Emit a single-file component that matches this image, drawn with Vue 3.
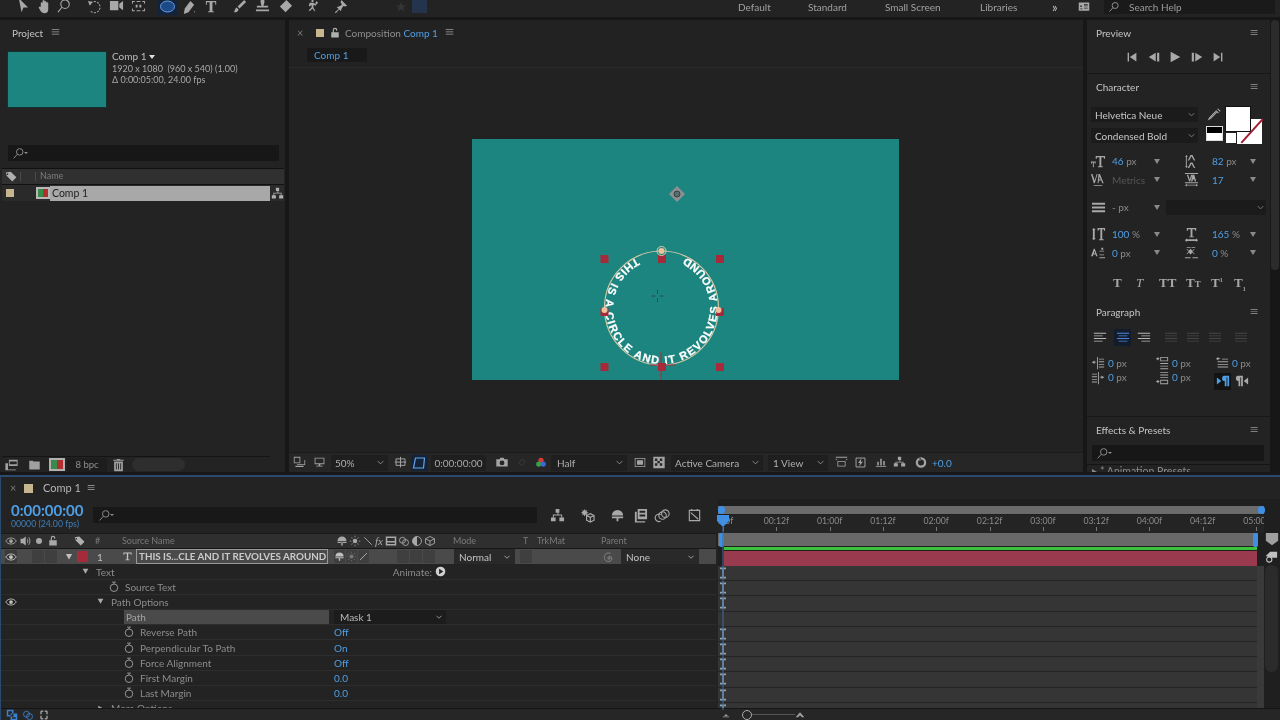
<script setup>
import { h } from 'vue'

const paths = {
  arrow: { f: 'M4 -2L14 8H9L7 13Z' },
  hand: { f: 'M4 7V3.5a1 1 0 012 0V1a1 1 0 012 0v1a1 1 0 012 0v1.5a1 1 0 012 0V10c0 3-2 4-4 4s-3-1-4-2L2 8.5c-.6-1 .6-2 1.5-1z' },
  zoom: { s: 'M7.5 0a4.5 4.5 0 100 9 4.5 4.5 0 000-9zM4 8l-4 5' },
  rotate: { s: 'M4 3A6 6 0 1 1 3 11', f: 'M1 1l5 1-3 4z', dash: true },
  camera: { f: 'M1 1h9v10H1zM11 4l4-3v10l-4-3z' },
  pan: { f: 'M1 1h3v1H2v2H1zM12 1h3v3h-1V2h-2zM1 9h1v2h2v1H1zM14 9h1v3h-3v-1h2zM6 1h4v1H6zM6 11h4v1H6zM5 5h2v3H5zM9 5h2v3H9z' },
  pen: { f: 'M10 1l4 4-6 8-5 2 1-6zM14 12h1v1h-1z' },
  textT: { f: 'M2 1h11v4h-1V2.5H9v9.5h1.5v1h-6v-1H6V2.5H3V5H2z' },
  brush: { f: 'M13 0l2 2-7 7-2-2zM5 8l2 2c-1 3-3 3-5 3 1-1 1-4 3-5z' },
  stamp: { f: 'M6 0h4v3L9 6h5v2H2V6h5L6 3zM1 10h14v2H1z' },
  eraser: { f: 'M9 0l6 6-7 7-6-6z' },
  roto: { f: 'M7 0h2v2H7zM5 3h4l3 2-1 1-2-1v3l2 4h-1L8 9l-3 3-1-1 3-3V5L5 7 4 6zM12 1l2 2-2 2-1-1z' },
  pin: { f: 'M9 0l6 6-2 1-2-.5-2 3-.5 2.5-2-2-3.5 4-1-1 4-3.5-2-2 2.5-.5 3-2L8 2z' },
  star: { f: 'M8 1l2 5h5l-4 3 2 5-5-3-5 3 2-5-4-3h5z' },
  menuBars: { f: 'M1 3h10v1H1zM1 6h10v1H1zM1 9h10v1H1z' },
  search: { s: 'M9.5 2a4 4 0 100 8 4 4 0 000-8zM6.5 9L2 14' },
  tag: { f: 'M1 3l6-1 7 7-5 5-7-7zM4 5a1 1 0 100 .1z' },
  flow: { f: 'M6 1h4v4H9v2h4v3h2v4h-5v-4h2V8H4v2h2v4H1v-4h2V7h5V5H6z' },
  prev: { f: 'M3 3h1.6v10H3zM13 3v10L5.5 8z' },
  back: { f: 'M10 3v10L2 8zM11.5 3H14v10h-2.5z' },
  play: { f: 'M3 2l11 6-11 6z' },
  fwd: { f: 'M2 3h2.5v10H2zM6 3l8 5-8 5z' },
  next: { f: 'M3 3l7.5 5L3 13zM11.4 3H13v10h-1.6z' },
  dropper: { s: 'M11 2l3 3M9 4l3 3M10 6l-7 7-2 1 1-2 7-7' },
  sizeT: { f: 'M5 2h10v3h-1l-.5-1.5H11V13h1.5v1h-5v-1H9V3.5H6.5L6 5H5zM0 8h5v2H4V9H3v5H2V9H1v1H0z' },
  lead: { f: 'M7 1h2l3 6h-1.500L8 2.500 5.500 7H4zM7 9h2l3 6h-1.500L8 10.500 5.500 15H4zM1 3l2-2 1 2H3v10h1l-1 2-2-2h1V3z' },
  kernV: { f: 'M0 2h1.500L4 9l2-7h1L4 12H3zM8 2h1.500l4 10H12l-1-3H8.500l-.5 3H7zM9 5l-.3 3H10.500zM3 14h9v1H3z' },
  track: { f: 'M1 1h14v1H1zM3 3h1.500L6 8l1.500-5H9L6.500 10H5.500zM9 3h2l2 7h-1.500l-.5-2H9.500L9 10H7.500zM1 11h14v1H1zM1 14l2-1.500V13.500h10V12.500l2 1.500-2 1.500V14.500H3V15.500z' },
  bars: { f: 'M1 3h14v2H1zM1 7h14v2H1zM1 11h14v2H1z' },
  vscale: { f: 'M3 1l2 2H4v9h1l-2 2-2-2h1V3H1zM7 1h8v3h-1l-.5-1.500H12V13h1.500v1h-5v-1H10V2.500H8.500L8 4H7z' },
  hscale: { f: 'M3 1h10v3h-1l-.5-1.500H9V10h1.500v1h-5v-1H7V2.500H4.500L4 4H3zM1 14l2-2v1h10v-1l2 2-2 2v-1H3v1z' },
  baseline: { f: 'M0 12L3 4h1l3 8H5.500L5 10H2.500L2 12zM3 9h1.500L3.700 6.500zM9 6h5v1H9zM9 10h5v1H9zM9 13h6v1H9zM11 3h2v2h-2z' },
  tsume: { f: 'M3 2h4v1H3zM8 2h4v1H8zM3 4l2 2 2-2 2 2 2-2v1l-2 2 2 2v1l-2-2-2 2-2-2-2 2V9l2-2-2-2zM1 13h6v1H1zM9 13h6v1H9z' },
  alignL: { f: 'M1 2h14v1H1zM1 5h10v1H1zM1 8h14v1H1zM1 11h10v1H1z' },
  alignC: { f: 'M1 2h14v1H1zM3 5h10v1H3zM1 8h14v1H1zM3 11h10v1H3z' },
  alignR: { f: 'M1 2h14v1H1zM5 5h10v1H5zM1 8h14v1H1zM5 11h10v1H5z' },
  justify: { f: 'M1 2h14v1H1zM1 5h14v1H1zM1 8h14v1H1zM1 11h14v1H1z' },
  indL: { f: 'M1 7l3-2v1.500h2v1H4V9zM7 1h1v14H7zM9 3h6v1H9zM9 6h6v1H9zM9 9h6v1H9zM9 12h6v1H9z' },
  indR: { f: 'M15 7l-3-2v1.500h-2v1h2V9zM8 1h1v14H8zM1 3h6v1H1zM1 6h6v1H1zM1 9h6v1H1zM1 12h6v1H1z' },
  spB: { f: 'M1 3l3-2v1.500h1v1H4V5zM6 1h9v5H6zM7 2v3h7V2zM6 8h9v1H6zM6 11h9v1H6zM6 14h9v1H6z' },
  spA: { f: 'M6 1h9v1H6zM6 4h9v1H6zM6 7h9v1H6zM1 12l3-2v1.500h1v1H4V14zM6 10h9v5H6zM7 11v3h7v-3z' },
  indF: { f: 'M1 3l3-2v1.500h2v1H4V5zM8 3h7v1H8zM3 6h12v1H3zM3 9h12v1H3zM3 12h12v1H3z' },
  ltr: { f: 'M1 4l5 4-5 4zM9 2h6v12h-2V4h-1v10h-2V8C8 8 7 7 7 5s1-3 2-3z' },
  rtl: { f: 'M15 4l-5 4 5 4zM3 2h6v12H7V4H6v10H4V8C3 8 1 7 1 5s1-3 2-3z' },
  interpret: { f: 'M5 2h10v7H5zM6 4v3h8V4zM1 6h3v7h9v1H1z' },
  folder: { f: 'M2 3h4l1 1h7v9H2z' },
  trash: { f: 'M6 1h4v1h4v1H2V2h4zM3 4h10v11H3zM5 6v7h1V6zM7.500 6v7h1V6zM10 6v7h1V6z' },
  lock: { f: 'M3 7h10v7H3zM5 7V4a3 3 0 016 0v1H9.500V4a1.500 1.500 0 00-3 0v3z' },
  screen: { f: 'M1 1h8v8H1zM2 2v6h6V2zM5 10h9V5h1v6H5zM3 12h10v1.500H3z' },
  monitor: { f: 'M2 2h12v8H2zM3 3v6h10V3zM7 10h2v2h3v1H4v-1h3z' },
  safe: { s: 'M2.500 3.500h11v8h-11zM8 1v13M1 7.500h14' },
  maskBox: { s: 'M4 3h9l-1 10H2z' },
  camera2: { f: 'M1 4h4l1-2h4l1 2h4v9H1zM8 5.500a3 3 0 100 6 3 3 0 000-6z' },
  chain: { s: 'M6 6a3 3 0 104 4M10 10a3 3 0 10-4-4' },
  region: { f: 'M1 2h14v12H1zM2 3v10h12V3zM4 5h8v6H4z' },
  checker: { f: 'M1 1h14v14H1zM3 3v3h3V3zM9 3v3h3V3zM6 6v3h3V6zM3 9v3h3V9zM9 9v3h3V9z' },
  fast: { f: 'M1 1h14v1H1zM3 6h10v7H3zM4 7v5h8V7zM1 3l2 2H1zM15 3l-2 2h2z' },
  fastP: { s: 'M2.500 2.500h11v11h-11z', f: 'M9 3L5 8.500h2.500L6 13l5-6H8.500z' },
  graph: { f: 'M1 13h14v1H1zM3 7h2v5H3zM7 3h2v9H7zM11 6h2v6h-2z' },
  flow2: { f: 'M6 1h4v4H9v2h4v2h2v4h-5V9h2V8H4v1h2v4H1V9h2V7h5V5H6z' },
  reset: { f: 'M8 1a7 7 0 100 14A7 7 0 008 1zm0 3a4 4 0 110 8 4 4 0 010-8zM6 1l3 3-3 2z' },
  mini: { f: 'M1 2h14v11H1zM3 6v2h2V6zM8 4v1h5V4zM8 6v1h5V6zM8 9v1h5V9zM3 10v1h3v-1z' },
  burst: { f: 'M5 1l1 2 2-1-1 2 2 1-2 1 1 2-2-1-1 2-1-2-2 1 1-2-2-1 2-1-1-2 2 1z', s: 'M11 6l4 2v5l-4 2-4-2V8zM7 8l4 2 4-2M11 10v5' },
  shy: { f: 'M8 2a6 6 0 016 6H2a6 6 0 016-6zM2 9h12v2H2zM7 11h2v3H7z' },
  frames: { f: 'M5 1h10v11H5zM7 3v2h6V3zM7 7v2h6V7zM2 4h2v10h9v1.500H2z' },
  circles: { s: 'M10 2a4 4 0 100 8 4 4 0 000-8zM7 4a4 4 0 100 8 4 4 0 000-8zM5 7a4 4 0 100 7' },
  graphEd: { s: 'M2.500 2.500h11v11h-11zM4 5l8 7M5 1v2M11 1v2' },
  eye: { s: 'M1 8c2-3 4-4 7-4s5 1 7 4c-2 3-4 4-7 4s-5-1-7-4z', f: 'M8 5.500a2.500 2.500 0 100 5 2.500 2.500 0 000-5z' },
  audio: { f: 'M2 5h3l4-3v12l-4-3H2z', s: 'M11 5c1 1 1 5 0 6M13 3c2 2 2 8 0 10' },
  dot: { f: 'M8 4a4 4 0 100 8 4 4 0 000-8z' },
  shyS: { f: 'M8 2a6 6 0 016 6H2a6 6 0 016-6zM2 9h12v1.500H2zM7 10h2v4H7z' },
  sun: { f: 'M8 5a3 3 0 100 6 3 3 0 000-6zM7.500 1h1v2h-1zM7.500 13h1v2h-1zM1 7.500h2v1H1zM13 7.500h2v1h-2zM3 3.700l.7-.7L5 4.300l-.7.7zM11 11.700l.7-.7L13 12.300l-.7.7zM3 12.300l1.300-1.300.7.7L3.700 13zM11 4.300L12.300 3l.7.7L11.700 5z' },
  slash: { s: 'M3 3l10 10' },
  slashR: { s: 'M3 13L13 3' },
  frameB: { f: 'M1 2h14v12H1zM3 4v4h10V4zM3 10v2h10v-2z' },
  half: { f: 'M8 2a6 6 0 100 12V2z', s: 'M8 2a6 6 0 110 12A6 6 0 018 2z' },
  cube: { s: 'M8 2l6 3v6l-6 3-6-3V5zM2 5l6 3 6-3M8 8v6' },
  spiral: { s: 'M8 8a1.500 1.500 0 11-1.500 1.500c0-2.500 4-3.500 5-.5s-1.500 5-4.500 5S1 11 2 7s5-5 8-4' },
  watch: { s: 'M8 4a5 5 0 100 10A5 5 0 008 4zM5.500 1.500h5M8 4V2' },
  tri: { f: 'M3 3h10l-5 9z' },
  triR: { f: 'M4 3l9 5-9 5z' },
  chev: { s: 'M4 6l4 4 4-4' },
  animate: { f: 'M8 1a7 7 0 100 14A7 7 0 008 1zM6 4l6 4-6 4z' },
  layerT: { f: 'M2 2h12v3.500h-1l-.5-2H9v9h2v1H5v-1h2v-9H3.500L3 5.500H2z' },
  stack: { f: 'M1 1h9v9H1zM3 3v5h5V3zM6 6h9v9H6zM8 11h5v2H8z' },
  circ2: { s: 'M6 3a4 4 0 100 8 4 4 0 000-8zM10 6a4 4 0 100 8 4 4 0 000-8z' },
  braces: { f: 'M4 2h3v2H5v3H3V5a3 3 0 011-3zM9 2h3a3 3 0 011 3v2h-2V4H9zM3 9h2v3h2v2H4a3 3 0 01-1-3zM11 9h2v2a3 3 0 01-1 3H9v-2h2z' },
  marker: { f: 'M1 1h14v9l-7 5-7-5z' },
  nav: { f: 'M2 8l5-5h8v7H8z', s: 'M6 9a3 3 0 100 6 3 3 0 000-6z' },
  mtn: { f: 'M1 13L8 5l7 8zM5 13l3-3 3 3z' },
  mtnS: { f: 'M5 11l3-3 3 3zM3 12h10v1H3z' }
}

const Ic = (props) => {
  const p = paths[props.n] || {}
  const kids = []
  if (p.f) kids.push(h('path', { d: p.f, fill: 'currentColor', 'fill-rule': 'evenodd' }))
  if (p.s) kids.push(h('path', { d: p.s, fill: 'none', stroke: 'currentColor', 'stroke-width': 1.2, 'stroke-dasharray': p.dash ? '2 1.5' : undefined }))
  return h('svg', { class: 'ic', viewBox: '0 0 16 16' }, kids)
}
Ic.props = ['n']

const rows = [
  { name: 'Text', indent: 95, tri: 'tri', animate: true, key: true },
  { name: 'Source Text', indent: 124, watch: true, key: true },
  { name: 'Path Options', indent: 110, tri: 'tri', eye: true, key: true },
  { name: 'Path', indent: 126, path: true, key: false },
  { name: 'Reverse Path', indent: 139, watch: true, value: 'Off', key: true },
  { name: 'Perpendicular To Path', indent: 139, watch: true, value: 'On', key: true },
  { name: 'Force Alignment', indent: 139, watch: true, value: 'Off', key: true },
  { name: 'First Margin', indent: 139, watch: true, value: '0.0', key: true },
  { name: 'Last Margin', indent: 139, watch: true, value: '0.0', key: true },
  { name: 'More Options', indent: 110, tri: 'triR', key: true }
]
const ticks = ['0:00f', '00:12f', '01:00f', '01:12f', '02:00f', '02:12f', '03:00f', '03:12f', '04:00f', '04:12f', '05:00f']
const toolsA = ['arrow', 'hand', 'zoom']
const toolsB = ['rotate', 'camera', 'pan']
</script>

<template>
  <div class="app">
    <header class="toolbar">
      <span class="grip"></span>
      <div class="tgroup g1"><Ic v-for="t in toolsA" :key="t" :n="t" /></div>
      <div class="tgroup g2"><Ic v-for="t in toolsB" :key="t" :n="t" /></div>
      <span class="ellipse-btn">
        <svg viewBox="0 0 16 14" class="ellipse"><ellipse cx="8" cy="6.500" rx="7" ry="5.500" /></svg>
      </span>
      <div class="tgroup g3"><Ic n="pen" /><Ic n="textT" /></div>
      <div class="tgroup g4"><Ic n="brush" /><Ic n="stamp" /><Ic n="eraser" /></div>
      <div class="tgroup g5"><Ic n="roto" /><Ic n="pin" /></div>
      <Ic n="star" class="dimstar" />
      <span class="dimbox"></span>
      <nav class="workspaces">
        <span class="ws ws1">Default</span>
        <span class="ws ws2">Standard</span>
        <span class="ws ws3">Small Screen</span>
        <span class="ws ws4">Libraries</span>
        <span class="ws5">»</span>
        <Ic n="mini" class="wsicon" />
      </nav>
      <div class="help"><Ic n="search" /><span>Search Help</span></div>
    </header>

    <div class="main">
      <section class="project">
        <div class="phead"><span class="ptitle">Project</span><Ic n="menuBars" /></div>
        <div class="pinfo">
          <div class="thumb"></div>
          <div class="meta">
            <div class="meta-t">Comp 1 <i class="down"></i></div>
            <div>1920 x 1080&nbsp; (960 x 540) (1.00)</div>
            <div>Δ 0:00:05:00, 24.00 fps</div>
          </div>
        </div>
        <div class="search psearch"><Ic n="search" /><i class="mini-down"></i></div>
        <div class="pcols">
          <Ic n="tag" class="ptag" /><span class="sep"></span><span class="sep s2"></span><span class="pname">Name</span>
        </div>
        <div class="pitem">
          <span class="swatch"></span>
          <span class="compicon"><i></i></span>
          <span class="pitem-name">Comp 1</span>
          <Ic n="flow" class="pflow" />
        </div>
        <div class="grow"></div>
        <div class="pfoot">
          <Ic n="interpret" /><Ic n="folder" /><span class="colorcomp"><i></i></span>
          <span class="bpc">8 bpc</span><Ic n="trash" class="ptrash" /><span class="pill"></span>
        </div>
      </section>

      <section class="viewer">
        <div class="vhead">
          <span class="x">×</span><span class="swatch sw2"></span><Ic n="lock" class="vlock" />
          <span class="vtitle">Composition <b>Comp 1</b></span><Ic n="menuBars" />
        </div>
        <div class="vtabs"><span class="vtab">Comp 1</span></div>
        <div class="stage">
          <div class="canvas">
            <svg class="overlay" viewBox="472 139 427 241">
              <defs>
                <path id="ring" d="M661.500 252A56 56 0 1 0 661.600 252" />
              </defs>
              <circle cx="661.500" cy="308" r="57" fill="none" stroke="#cfc7a4" stroke-width="1.200" />
              <text class="ringtext">
                <textPath href="#ring" startOffset="26" textLength="300" lengthAdjust="spacing">THIS IS A CIRCLE AND IT REVOLVES AROUND</textPath>
              </text>
              <g fill="#a52b3b">
                <rect x="600.500" y="255" width="8" height="8" /><rect x="658" y="255" width="8" height="8" />
                <rect x="716" y="255" width="8" height="8" /><rect x="600.500" y="308" width="8" height="8" />
                <rect x="716" y="308" width="8" height="8" /><rect x="600.500" y="363" width="8" height="8" />
                <rect x="658" y="363" width="8" height="8" /><rect x="716" y="363" width="8" height="8" />
              </g>
              <path d="M661 352V380M650 365H675" stroke="#a52b3b" stroke-width="1" />
              <g fill="#efc29c">
                <circle cx="661.500" cy="251" r="3" /><circle cx="604.500" cy="310" r="3" /><circle cx="718.500" cy="310" r="3" />
              </g>
              <circle cx="661.500" cy="251" r="4.500" fill="none" stroke="#d8cfa8" />
              <path d="M657.500 290V294M657.500 298V302M651.500 296H655.500M659.500 296H663.500" stroke="#2b4d4c" stroke-width="1" />
              <path d="M677 186L685 194L677 202L669 194Z" fill="#8e8f95" />
              <circle cx="677" cy="194" r="3" fill="#54706f" stroke="#33403f" />
            </svg>
          </div>
        </div>
        <div class="vfoot">
          <Ic n="screen" /><Ic n="monitor" />
          <span class="drop">50%<Ic n="chev" /></span>
          <Ic n="safe" /><span class="maskbtn"><Ic n="maskBox" /></span>
          <span class="vtime">0:00:00:00</span>
          <Ic n="camera2" /><Ic n="chain" class="dim" />
          <svg class="rgb" viewBox="0 0 16 16"><circle cx="8" cy="5" r="3.500" fill="#d93a3a" /><circle cx="5" cy="10" r="3.500" fill="#3aa04a" /><circle cx="11" cy="10" r="3.500" fill="#3a6ad9" /></svg>
          <span class="drop">Half<Ic n="chev" /></span>
          <Ic n="region" /><Ic n="checker" />
          <span class="drop">Active Camera<Ic n="chev" /></span>
          <span class="drop">1 View<Ic n="chev" /></span>
          <Ic n="fast" /><Ic n="fastP" /><Ic n="graph" /><Ic n="flow2" /><Ic n="reset" />
          <span class="exposure">+0.0</span>
        </div>
      </section>

      <aside class="side">
        <section class="preview">
          <div class="shead"><span>Preview</span><Ic n="menuBars" /></div>
          <div class="controls">
            <Ic n="prev" /><Ic n="back" /><Ic n="play" /><Ic n="fwd" /><Ic n="next" />
          </div>
        </section>
        <section class="character">
          <div class="shead"><span>Character</span><Ic n="menuBars" /></div>
          <div class="fontarea">
            <div class="fontcol">
              <div class="fontsel"><span>Helvetica Neue</span><Ic n="chev" /></div>
              <div class="fontsel"><span>Condensed Bold</span><Ic n="chev" /></div>
            </div>
            <div class="pickcol">
              <Ic n="dropper" class="dropper" />
              <div class="bw"><i></i><b></b></div>
            </div>
            <div class="swatches">
              <span class="strokebox"></span><span class="nonebox"></span><span class="fillbox"></span>
              <span class="redslash"></span>
            </div>
          </div>
          <div class="cgrid">
            <div class="cell"><Ic n="sizeT" /><span class="v"><b>46</b> px</span><i class="arr"></i></div>
            <div class="cell c2"><Ic n="lead" /><span class="v"><b>82</b> px</span><i class="arr"></i></div>
            <div class="cell"><Ic n="kernV" /><span class="v off">Metrics</span><i class="arr"></i></div>
            <div class="cell c2"><Ic n="track" /><span class="v"><b>17</b></span><i class="arr"></i></div>
          </div>
          <div class="cell stroke-row">
            <Ic n="bars" /><span class="v">- px</span><i class="arr"></i>
            <div class="strokesel"><Ic n="chev" /></div>
          </div>
          <div class="cgrid cg3">
            <div class="cell"><Ic n="vscale" /><span class="v"><b>100</b> %</span><i class="arr"></i></div>
            <div class="cell c2"><Ic n="hscale" /><span class="v"><b>165</b> %</span><i class="arr"></i></div>
            <div class="cell"><Ic n="baseline" /><span class="v"><b>0</b> px</span><i class="arr"></i></div>
            <div class="cell c2"><Ic n="tsume" /><span class="v"><b>0</b> %</span><i class="arr"></i></div>
          </div>
          <div class="tstyles">
            <span class="b">T</span><span class="it">T</span><span>TT</span><span>T<small>T</small></span><span>T<sup>1</sup></span><span>T<sub>1</sub></span>
          </div>
        </section>
        <section class="paragraph">
          <div class="shead"><span>Paragraph</span><Ic n="menuBars" /></div>
          <div class="aligns">
            <Ic n="alignL" /><span class="alignon"><Ic n="alignC" /></span><Ic n="alignR" />
            <span class="adim"><Ic n="justify" /><Ic n="justify" /><Ic n="justify" /><Ic n="justify" /></span>
          </div>
          <div class="pgrid">
            <span class="pv"><Ic n="indL" /><span class="v"><b>0</b> px</span></span>
            <span class="pv"><Ic n="spB" /><span class="v"><b>0</b> px</span></span>
            <span class="pv"><Ic n="indF" /><span class="v"><b>0</b> px</span></span>
            <span class="pv up"><Ic n="indR" /><span class="v"><b>0</b> px</span></span>
            <span class="pv up"><Ic n="spA" /><span class="v"><b>0</b> px</span></span>
            <span class="dirs"><span class="diron"><Ic n="ltr" /></span><Ic n="rtl" /></span>
          </div>
        </section>
        <section class="effects">
          <div class="shead"><span>Effects &amp; Presets</span><Ic n="menuBars" /></div>
          <div class="search esearch"><Ic n="search" /><i class="mini-down"></i></div>
          <div class="tree"><i class="rt"></i>* Animation Presets</div>
        </section>
      </aside>

      <div class="sidebar"><span></span></div>
    </div>

    <section class="timeline">
      <div class="ttabs">
        <span class="x">×</span><span class="swatch sw3"></span><span class="ttitle">Comp 1</span><Ic n="menuBars" />
      </div>
      <div class="tbody">
        <div class="tleft">
          <div class="ttools">
            <div class="timecode"><div class="tc">0:00:00:00</div><div class="tf">00000 (24.00 fps)</div></div>
            <div class="search tsearch"><Ic n="search" /><i class="mini-down"></i></div>
            <div class="tbtns">
              <Ic n="flow" class="fb1" /><Ic n="burst" class="fb2" /><Ic n="shy" class="fb3" /><Ic n="frames" class="fb4" /><Ic n="circles" class="fb5" /><Ic n="graphEd" class="fb6" />
            </div>
          </div>
          <div class="cols">
            <span class="swset"><Ic n="eye" /><Ic n="audio" /><Ic n="dot" /><Ic n="lock" /></span>
            <Ic n="tag" class="ctag" />
            <span class="chash">#</span>
            <span class="csrc">Source Name</span>
            <span class="cswitch"><Ic n="shyS" /><Ic n="sun" /><Ic n="slash" /><em>fx</em><Ic n="frameB" /><Ic n="circ2" /><Ic n="half" /><Ic n="cube" /></span>
            <span class="cmode">Mode</span>
            <span class="ct">T</span>
            <span class="ctrk">TrkMat</span>
            <span class="cpar">Parent</span>
          </div>
          <div class="layer">
            <span class="leye"><Ic n="eye" /></span>
            <span class="blank b1"></span><span class="blank"></span>
            <Ic n="tri" class="ltri" />
            <span class="lred"></span>
            <span class="lnum">1</span>
            <Ic n="layerT" class="lt" />
            <span class="lname">THIS IS...CLE AND IT REVOLVES AROUND</span>
            <span class="lsw">
              <span class="on"><Ic n="shyS" /></span><span class="on dimmed"><Ic n="sun" /></span><span class="on"><Ic n="slashR" /></span>
              <span class="gap"></span><span class="blank"></span><span class="blank"></span><span class="blank"></span>
            </span>
            <span class="lmode">Normal<Ic n="chev" /></span>
            <span class="blank lb"></span>
            <Ic n="spiral" class="lspiral" />
            <span class="lpar">None<Ic n="chev" /></span>
          </div>
          <div class="props">
            <div v-for="r in rows" :key="r.name" class="prow">
              <span v-if="r.eye" class="peye"><Ic n="eye" /></span>
              <div class="pn" :class="{ pathcell: r.path }" :style="{ paddingLeft: r.path ? '2px' : r.indent + 'px' }">
                <Ic v-if="r.tri" :n="r.tri" class="ptri" />
                <Ic v-if="r.watch" n="watch" class="pwatch" />
                <span>{{ r.name }}</span>
                <span v-if="r.animate" class="anim">Animate:<Ic n="animate" /></span>
              </div>
              <div v-if="r.path" class="masksel"><span>Mask 1</span><Ic n="chev" /></div>
              <div v-else-if="r.value" class="pvalue">{{ r.value }}</div>
            </div>
          </div>
        </div>

        <div class="tright">
          <div class="nav"><i class="nav-l"></i><i class="nav-r"></i></div>
          <div class="ruler">
            <span v-for="t in ticks" :key="t" class="tick">{{ t }}</span>
          </div>
          <div class="work"><i class="w-l"></i><i class="w-r"></i></div>
          <div class="green"></div>
          <div class="redbar"></div>
          <div class="tracks">
            <div v-for="r in rows" :key="r.name" class="track">
              <svg v-if="r.key" class="beam" viewBox="0 0 7 13"><path d="M0 0h7v2H4.500v9H7v2H0v-2h2.500V2H0z" /></svg>
            </div>
          </div>
          <svg class="playhead" viewBox="0 0 14 196">
            <path d="M1 1h12v6l-6 6-6-6z" fill="#3f8fe2" />
            <path d="M7 12V196" stroke="#3d6c9e" stroke-width="1" />
          </svg>
          <div class="tside">
            <Ic n="marker" class="smark" />
            <Ic n="nav" class="snav" />
            <span class="sscroll"></span>
          </div>
        </div>
      </div>
      <footer class="tfoot">
        <span class="fl"><Ic n="stack" /><Ic n="circ2" /><Ic n="braces" /></span>
        <span class="fr"><Ic n="mtnS" /><span class="fring"></span><span class="fline"></span><Ic n="mtn" /></span>
      </footer>
    </section>
  </div>
</template>

<style scoped>
.app { width: 1280px; height: 720px; overflow: hidden; display: flex; flex-direction: column; background: #171717; color: #a3a3a3; font: 10px/1.2 Lato, sans-serif; filter: blur(0.3px); }
.toolbar { height: 17px; margin-bottom: 3px; flex: none; background: #232323; display: flex; align-items: flex-start; overflow: hidden; color: #a8a8a8; position: relative; }
.grip { width: 15px; flex: none; }
.tgroup { display: flex; flex: none; }
.tgroup .ic { width: 15px; height: 15px; }
.g1 { gap: 6.500px; }
.g2 { gap: 7px; margin-left: 14px; }
.ellipse-btn { width: 20px; height: 15px; background: #12233d; margin-left: 11px; display: block; flex: none; }
.ellipse { width: 17px; height: 14px; margin-left: 1.500px; display: block; }
.ellipse ellipse { fill: #1c4a88; stroke: #6b9bdc; stroke-width: 1; }
.g3 { gap: 8px; margin-left: 4px; }
.g4 { gap: 8px; margin-left: 13px; }
.g5 { gap: 13px; margin-left: 12px; }
.dimstar { width: 12px; height: 12px; margin-left: 47px; margin-top: 1px; color: #343434; flex: none; }
.dimbox { width: 15px; height: 13px; margin-left: 5px; background: #24344c; flex: none; }
.workspaces { margin-left: 311px; display: flex; align-items: center; height: 14px; color: #a0a0a0; flex: none; }
.ws { display: block; flex: none; }
.ws1 { width: 70px; }
.ws2 { width: 77px; }
.ws3 { width: 95px; }
.ws4 { width: 72px; }
.ws5 { width: 24px; font-size: 13px; line-height: 12px; color: #c0c0c0; flex: none; }
.wsicon { width: 16px; height: 12px; color: #a8a8a8; flex: none; }
.help { margin-left: 12px; width: 171px; height: 14px; background: #1a1a1a; display: flex; align-items: center; gap: 9px; padding-left: 4px; color: #9a9a9a; box-sizing: border-box; flex: none; }
.help .ic { width: 12px; height: 12px; }

.main { height: 452px; flex: none; display: flex; }
.project { width: 285px; background: #232323; display: flex; flex-direction: column; flex: none; }
.phead { height: 24px; display: flex; align-items: center; padding: 2px 0 0 12px; gap: 8px; box-sizing: border-box; color: #c4c4c4; flex: none; }
.phead .ic { width: 12px; height: 12px; color: #a0a0a0; }
.pinfo { display: flex; padding: 7px 0 0 7px; height: 101px; box-sizing: border-box; flex: none; }
.thumb { width: 100px; height: 57px; box-sizing: border-box; background: #1d8580; border: 1px solid #14302f; }
.meta { margin-left: 5px; font-size: 9px; line-height: 11.500px; color: #a8a8a8; }
.meta-t { color: #bcbcbc; font-size: 10px; }
.down { display: inline-block; border: 3px solid transparent; border-top: 4px solid #e0e0e0; border-bottom: 0; vertical-align: 1px; }
.search { background: #171717; display: flex; align-items: center; color: #8c8c8c; box-sizing: border-box; }
.search .ic { width: 13px; height: 13px; }
.mini-down { border: 2px solid transparent; border-top: 2px solid #8c8c8c; border-bottom: 0; margin-left: -1px; }
.psearch { width: 271px; height: 16px; margin-left: 8px; padding-left: 4px; border-radius: 1px; flex: none; }
.pcols { margin: 7px 0 0 2px; height: 17px; width: 282px; background: #303030; border-top: 1px solid #111; border-bottom: 1px solid #111; box-sizing: border-box; display: flex; align-items: center; color: #7d7d7d; font-size: 9px; flex: none; }
.ptag { width: 13px; height: 13px; margin-left: 3px; color: #b0b0b0; }
.sep { width: 1px; height: 9px; background: #4a4a4a; margin-left: 2px; }
.s2 { margin-left: 14px; }
.pname { margin-left: 4px; }
.pitem { margin-left: 2px; width: 282px; height: 16px; background: #2a2a2a; display: flex; align-items: center; flex: none; }
.swatch { width: 8px; height: 8px; background: #c6b58e; display: block; flex: none; }
.pitem .swatch { margin-left: 4px; }
.compicon { width: 14px; height: 12px; background: #b8b8b8; margin-left: 22px; display: block; padding: 2px; box-sizing: border-box; }
.compicon i, .colorcomp i { display: block; width: 100%; height: 100%; background: linear-gradient(90deg, #3a8a4c 50%, #b03030 50%); }
.pitem-name { width: 220px; height: 15px; background: #a8a8a8; color: #1e1e1e; line-height: 15px; padding-left: 2px; box-sizing: border-box; font-size: 10.500px; }
.pflow { width: 13px; height: 13px; margin-left: 1px; color: #b0b0b0; }
.grow { flex: 1; }
.pfoot { height: 16px; border-top: 1px solid #141414; box-sizing: border-box; display: flex; align-items: center; margin-left: 2px; width: 268px; color: #a0a0a0; flex: none; }
.pfoot .ic { width: 15px; height: 14px; margin-left: 2px; }
.pfoot .ic:nth-child(2) { margin-left: 8px; }
.colorcomp { width: 16px; height: 13px; background: #b0b0b0; padding: 2px; box-sizing: border-box; margin-left: 7px; display: block; }
.bpc { margin-left: 2px; width: 40px; height: 14px; background: #1d1d1d; text-align: center; line-height: 14px; font-size: 9.500px; color: #8f8f8f; }
.pfoot .ptrash { margin-left: 4px; }
.pill { width: 53px; height: 13px; border-radius: 7px; background: #2e2e2e; margin-left: 6px; }

.viewer { width: 794px; margin-left: 4px; flex: none; background: #222; display: flex; flex-direction: column; }
.vhead { height: 24px; flex: none; display: flex; align-items: center; padding: 2px 0 0 8px; box-sizing: border-box; color: #a0a0a0; }
.vhead .ic { width: 12px; height: 12px; }
.x { width: 8px; color: #7a7a7a; font-size: 11px; flex: none; }
.sw2 { margin-left: 11px; }
.vhead .vlock { margin-left: 5px; color: #b0b0b0; }
.vtitle { margin-left: 4px; margin-right: 7px; color: #8f8f8f; }
.vtitle b { font-weight: 400; color: #4f9fe6; }
.vtabs { height: 24px; flex: none; border-bottom: 1px solid #2a2a2a; padding: 4px 0 0 18px; box-sizing: border-box; }
.vtab { display: block; width: 60px; height: 14px; background: #191919; color: #4f9fe6; line-height: 14px; padding-left: 7px; box-sizing: border-box; }
.stage { flex: 1; display: flex; align-items: center; padding-left: 183px; padding-bottom: 2px; box-sizing: border-box; min-height: 0; }
.canvas { width: 427px; height: 241px; background: #1d8580; position: relative; }
.overlay { position: absolute; inset: 0; width: 100%; height: 100%; }
.ringtext { font: 700 11px "Liberation Sans", sans-serif; fill: #fff; stroke: #fff; stroke-width: 0.25px; }
.vfoot { height: 20px; flex: none; background: #262626; border-top: 1px solid #1b1b1b; box-sizing: border-box; display: flex; align-items: center; color: #a4a4a4; font-size: 10px; }
.vfoot > .ic { width: 13px; height: 13px; flex: none; }
.vfoot > :nth-child(1) { margin-left: 4px; }
.vfoot > :nth-child(2) { margin-left: 7px; }
.vfoot > :nth-child(3) { margin-left: 5px; width: 57px; padding-left: 4px; }
.vfoot > :nth-child(4) { margin-left: 6px; }
.vfoot > :nth-child(5) { margin-left: 4px; }
.vfoot > :nth-child(6) { margin-left: 3px; }
.vfoot > :nth-child(7) { margin-left: 9px; width: 14px; }
.vfoot > :nth-child(8) { margin-left: 7px; width: 12px; }
.vfoot > :nth-child(9) { margin-left: 7px; }
.vfoot > :nth-child(10) { margin-left: 4px; width: 76px; padding-left: 6px; }
.vfoot > :nth-child(11) { margin-left: 7px; width: 12px; }
.vfoot > :nth-child(12) { margin-left: 6px; width: 14px; }
.vfoot > :nth-child(13) { margin-left: 5px; width: 92px; padding-left: 4px; }
.vfoot > :nth-child(14) { margin-left: 5px; width: 60px; padding-left: 5px; }
.vfoot > :nth-child(15) { margin-left: 7px; }
.vfoot > :nth-child(16) { margin-left: 5px; width: 15px; }
.vfoot > :nth-child(17) { margin-left: 7px; width: 12px; }
.vfoot > :nth-child(18) { margin-left: 6px; }
.vfoot > :nth-child(19) { margin-left: 9px; width: 12px; }
.vfoot > :nth-child(20) { margin-left: 5px; }
.drop { display: flex; align-items: center; justify-content: space-between; height: 16px; background: #1f1f1f; padding-right: 2px; box-sizing: border-box; color: #b0b0b0; flex: none; }
.drop .ic { width: 11px; height: 11px; color: #999; }
.maskbtn { width: 17px; height: 16px; background: #13233a; display: block; color: #6aa5ea; flex: none; }
.maskbtn .ic { width: 17px; height: 16px; display: block; }
.vtime { width: 55px; height: 16px; background: #1f1f1f; line-height: 17px; text-align: center; color: #a8a8a8; font-size: 10px; flex: none; }
.dim { color: #3d3d3d; }
.rgb { width: 12px; height: 13px; flex: none; }
.exposure { color: #4f9fe6; }

.side { width: 183px; margin-left: 4px; flex: none; background: #232323; overflow: hidden; display: flex; flex-direction: column; }
.shead { height: 26px; display: flex; justify-content: space-between; align-items: center; padding: 0 9px; box-sizing: border-box; color: #c4c4c4; font-size: 10px; }
.shead .ic { width: 11px; height: 11px; color: #a0a0a0; }
.preview { height: 54px; flex: none; border-bottom: 1px solid #181818; box-sizing: border-box; }
.controls { display: flex; gap: 7.500px; padding: 0 0 0 38px; margin-top: 4px; color: #a8a8a8; }
.controls .ic { width: 14px; height: 14px; }
.character { height: 223px; flex: none; }
.fontarea { position: relative; display: flex; padding-left: 4px; margin-top: 6px; height: 44px; }
.fontcol { width: 107px; display: flex; flex-direction: column; gap: 6px; margin-top: 1px; }
.fontsel { height: 15px; background: #1b1b1b; display: flex; justify-content: space-between; align-items: center; padding-left: 4px; color: #c8c8c8; font-size: 10px; }
.fontsel .ic { width: 11px; height: 11px; margin-right: 1px; color: #8a8a8a; }
.pickcol { width: 20px; margin-left: 8px; }
.dropper { width: 14px; height: 14px; display: block; margin: 1px 0 0 2px; color: #b0b0b0; }
.bw { width: 17px; height: 15px; margin-top: 5px; border: 1px solid #ddd; box-sizing: border-box; }
.bw i { display: block; height: 45%; background: #000; }
.bw b { display: block; height: 55%; background: #fff; }
.swatches { position: absolute; left: 138px; top: 0; width: 38px; height: 38px; overflow: hidden; }
.strokebox { position: absolute; left: 12px; top: 13px; width: 25px; height: 25px; background: #fff; }
.nonebox { position: absolute; left: 1px; top: 27px; width: 10px; height: 10px; background: #fff; }
.fillbox { position: absolute; left: 0; top: 0; width: 26px; height: 26px; background: #fff; border: 1px solid #111; box-sizing: border-box; }
.redslash { position: absolute; left: 11px; top: 24px; width: 32px; height: 2px; background: #a01c2e; transform: rotate(-48deg); }
.cgrid { display: grid; grid-template-columns: 93px 90px; margin-top: 2px; grid-auto-rows: 18.500px; padding-left: 4px; }
.cell { display: flex; align-items: center; color: #9a9a9a; }
.cell .ic { width: 15px; height: 15px; flex: none; color: #a8a8a8; }
.v { color: #8a8a8a; font-size: 10px; }
.v b { font-weight: 400; color: #4f9fe6; }
.cell .v { margin-left: 6px; width: 42px; }
.off { color: #565656; }
.arr { border: 3px solid transparent; border-top: 5px solid #8a8a8a; border-bottom: 0; }
.c2 .ic { margin-right: 7px; }
.c2 .v { width: 38px; margin-left: 6px; }
.stroke-row { margin: 10px 0 0 4px; height: 16px; }
.strokesel { margin-left: 6px; width: 100px; height: 15px; background: #1b1b1b; display: flex; justify-content: flex-end; align-items: center; }
.strokesel .ic { width: 11px; height: 11px; color: #888; }
.cg3 { margin-top: 10px; }
.tstyles { display: flex; margin-top: 13px; padding-left: 26px; font: 700 13px "Liberation Serif", serif; color: #a8a8a8; }
.tstyles span { width: 23px; }
.tstyles span:nth-child(3) { width: 27px; }
.tstyles span:nth-child(4) { width: 25px; }
.tstyles .it { font-style: italic; font-weight: 400; }
.tstyles small { font-size: 9px; }
.tstyles sup, .tstyles sub { font-size: 6px; }
.paragraph { height: 120px; flex: none; border-bottom: 1px solid #181818; box-sizing: border-box; padding-top: 2px; }
.aligns { display: flex; align-items: center; padding-left: 5px; margin-top: 4px; color: #b8b8b8; height: 17px; }
.aligns .ic { width: 16px; height: 14px; flex: none; }
.aligns > .ic:nth-child(3) { margin-left: 5px; }
.alignon { width: 17px; height: 17px; background: #131c2c; margin-left: 6px; color: #4a86d8; display: flex; align-items: center; justify-content: center; }
.adim { display: flex; gap: 6px; margin-left: 11px; color: #474747; }
.adim .ic:nth-child(4) { margin-left: 4px; }
.pgrid { display: grid; grid-template-columns: 64px 60px 55px; padding-left: 4px; margin-top: 8px; grid-auto-rows: 17px; }
.pv { display: flex; align-items: center; gap: 3px; }
.pv .ic { width: 14px; height: 14px; flex: none; color: #a8a8a8; }
.up { align-items: flex-start; }
.dirs { display: flex; align-items: center; margin-left: -1px; color: #a8a8a8; margin-top: 3px; gap: 4px; }
.diron { width: 17px; height: 17px; background: #131313; color: #4f9fe6; display: flex; align-items: center; justify-content: center; }
.dirs .ic { width: 14px; height: 14px; flex: none; }
.effects { flex: 1; overflow: hidden; }
.esearch { width: 172px; height: 16px; margin: 2px 0 0 5px; padding-left: 4px; }
.tree { margin-top: 3px; border-top: 1px solid #141414; padding-left: 5px; color: #8a8a8a; white-space: nowrap; line-height: 13px; font-size: 10.500px; }
.rt { display: inline-block; border: 3px solid transparent; border-left: 5px solid #888; border-right: 0; margin-right: 3px; }
.sidebar { margin-left: 1px; width: 8px; flex: none; }
.sidebar span { display: block; height: 250px; background: #2c2c2c; border-radius: 4px; }

.timeline { flex: 1; margin-top: 3px; background: #232323; border-top: 2px solid #2b4a70; border-left: 1px solid #2b4a70; box-sizing: border-box; display: flex; flex-direction: column; overflow: hidden; min-height: 0; }
.ttabs { height: 22px; flex: none; display: flex; align-items: center; padding-left: 9px; color: #a0a0a0; }
.ttabs .ic { width: 11px; height: 11px; margin-left: 6px; color: #b0b0b0; }
.sw3 { margin-left: 6px; width: 9px; height: 9px; }
.ttitle { margin-left: 10px; color: #b4b4b4; font-size: 11px; }
.tbody { flex: 1; display: flex; min-height: 0; }
.tleft { width: 715px; flex: none; display: flex; flex-direction: column; }
.ttools { height: 34px; flex: none; display: flex; position: relative; }
.timecode { width: 82px; margin-left: 10px; flex: none; }
.tc { color: #4f9fe6; font-weight: 700; font-size: 15px; line-height: 16px; margin-top: 3px; }
.tf { color: #3f7fba; font-size: 8.700px; line-height: 11px; }
.tsearch { width: 444px; height: 16px; margin-top: 8px; padding-left: 5px; background: #181818; flex: none; }
.tbtns { display: flex; margin-top: 9px; margin-left: 13px; color: #a8a8a8; }
.tbtns .ic { width: 15px; height: 15px; flex: none; }
.fb2, .fb3 { margin-left: 15px; }
.fb4, .fb5 { margin-left: 8px; }
.fb6 { margin-left: 16px; }
.cols { height: 16px; flex: none; background: #2f2f2f; border-top: 1px solid #1a1a1a; border-bottom: 1px solid #171717; box-sizing: border-box; display: flex; align-items: center; font-size: 9px; color: #7a7a7a; }
.cols .ic { height: 12px; width: 12px; flex: none; }
.swset { display: flex; width: 70px; padding-left: 4px; gap: 2px; color: #a8a8a8; box-sizing: border-box; flex: none; }
.ctag { margin-left: 3px; color: #b0b0b0; }
.chash { margin-left: 9px; width: 27px; flex: none; }
.csrc { width: 214px; flex: none; }
.cswitch { display: flex; width: 117px; color: #a8a8a8; align-items: center; flex: none; }
.cswitch .ic { margin-right: 1px; }
.cswitch em { font: italic 11px "Liberation Serif", serif; margin-right: 2px; }
.cmode { width: 70px; flex: none; }
.ct { width: 14px; flex: none; }
.ctrk { width: 64px; flex: none; }
.layer { height: 15px; flex: none; background: #4a4a4a; display: flex; align-items: center; position: relative; font-size: 10px; }
.layer .ic { flex: none; }
.leye { width: 12px; height: 13px; margin-left: 4px; color: #c8c8c8; display: flex; align-items: center; background: #3a3a3a; flex: none; }
.leye .ic { width: 12px; height: 12px; }
.blank { width: 12px; height: 13px; background: #3f3f3f; margin-left: 1px; display: block; flex: none; }
.b1 { margin-left: 15px; }
.ltri { width: 10px; height: 10px; margin-left: 7px; color: #c0c0c0; }
.lred { width: 11px; height: 11px; background: #a52b3b; margin-left: 3px; flex: none; }
.lnum { width: 32px; padding-left: 9px; box-sizing: border-box; color: #c0c0c0; flex: none; }
.lt { width: 11px; height: 11px; margin-left: 2px; color: #c4c4c4; }
.lname { margin-left: 3px; width: 192px; height: 15px; box-sizing: border-box; border: 1px solid #999; color: #cbcbcb; font-size: 9.800px; font-weight: 700; line-height: 13px; padding-left: 2px; white-space: nowrap; overflow: hidden; flex: none; }
.lsw { display: flex; width: 120px; margin-left: 6px; align-items: center; flex: none; }
.on { width: 11px; height: 13px; background: #3f3f3f; color: #c0c0c0; margin-right: 1px; display: flex; align-items: center; }
.on .ic { width: 11px; height: 11px; }
.dimmed { color: #777; }
.gap { width: 26px; }
.lmode { width: 61px; height: 15px; background: #292929; display: flex; align-items: center; justify-content: space-between; padding: 0 3px 0 5px; box-sizing: border-box; color: #c4c4c4; flex: none; }
.lmode .ic, .lpar .ic { width: 10px; height: 10px; }
.lb { margin-left: 5px; }
.lspiral { width: 12px; height: 12px; margin-left: 71px; color: #8a8a8a; }
.lpar { width: 78px; height: 15px; margin-left: 6px; background: #292929; display: flex; align-items: center; justify-content: space-between; padding: 0 3px 0 5px; box-sizing: border-box; color: #c4c4c4; flex: none; }
.props { flex: 1; overflow: hidden; padding-top: 0.500px; }
.prow { height: 15.200px; display: flex; align-items: center; border-bottom: 1px solid #2d2d2d; box-sizing: border-box; position: relative; color: #8c8c8c; font-size: 10px; }
.peye { position: absolute; left: 4px; top: 1px; width: 12px; height: 12px; color: #c0c0c0; }
.peye .ic { width: 12px; height: 12px; display: block; }
.pn { width: 329px; height: 14.200px; box-sizing: border-box; display: flex; align-items: center; position: relative; flex: none; }
.pathcell { width: 205px; margin-left: 123px; background: #4a4a4a; color: #a4a4a4; }
.ptri { position: absolute; width: 9px; height: 9px; margin-left: -15px; color: #aaa; }
.pwatch { position: absolute; width: 12px; height: 12px; margin-left: -17px; color: #a0a0a0; }
.anim { position: absolute; right: -116px; display: flex; align-items: center; gap: 3px; }
.anim .ic { width: 11px; height: 11px; color: #d0d0d0; }
.masksel { width: 112px; height: 14px; margin-left: 5px; background: #1c1c1c; display: flex; align-items: center; justify-content: space-between; padding: 0 2px 0 6px; box-sizing: border-box; color: #b8b8b8; flex: none; }
.masksel .ic { width: 10px; height: 10px; }
.pvalue { margin-left: 4px; color: #4f9fe6; }
.tright { flex: 1; position: relative; margin-left: 2px; background: #1f1f1f; display: flex; flex-direction: column; min-width: 0; }
.nav { height: 8px; margin-top: 7px; width: 546px; background: #6b6b6b; flex: none; position: relative; }
.nav-l, .nav-r { position: absolute; top: 0; width: 7px; height: 8px; background: #3f8fe2; border-radius: 4px; }
.nav-l { left: 0; }
.nav-r { right: -1px; }
.ruler { height: 18px; width: 546px; margin-top: 1px; display: flex; overflow: hidden; flex: none; background: #242424; font-size: 8.700px; color: #8c8c8c; }
.tick { flex: none; width: 53.300px; text-align: center; position: relative; line-height: 11px; }
.tick:first-child { margin-left: -21.600px; }
.tick::after { content: ""; position: absolute; left: 50%; bottom: 2px; width: 1px; height: 4px; background: #777; }
.work { height: 13px; width: 540px; background: #696969; flex: none; position: relative; }
.w-l, .w-r { position: absolute; top: 0; width: 5px; height: 14px; background: #3f8fe2; border-radius: 2px; }
.w-l { left: 1px; }
.w-r { right: 0; }
.green { height: 3px; width: 533px; margin: 1px 0 0 6px; background: #3bc43b; flex: none; }
.redbar { height: 15px; width: 533px; margin: 1px 0 0 6px; flex: none; background: #993a4e; }
.tracks { width: 546px; flex: 1; overflow: hidden; background: #3a3a3a; min-height: 0; }
.track { height: 15.200px; width: 539px; background: #353535; border-bottom: 1px solid #242424; box-sizing: border-box; position: relative; }
.beam { position: absolute; left: 2px; top: 1px; width: 6px; height: 12px; fill: #8fa3b5; }
.playhead { position: absolute; left: -2px; top: 15px; width: 14px; height: 196px; overflow: visible; }
.tside { position: absolute; left: 546px; top: 0; width: 17px; height: 100%; }
.smark { position: absolute; left: 1px; top: 33px; width: 14px; height: 14px; color: #a0a0a0; }
.snav { position: absolute; left: 0; top: 50px; width: 14px; height: 14px; color: #c0c0c0; }
.sscroll { position: absolute; left: 1px; top: 66px; width: 13px; height: 107px; background: #2b2b2b; border-radius: 6px; }
.tfoot { height: 12px; flex: none; background: #262626; border-top: 1px solid #151515; box-sizing: border-box; display: flex; justify-content: space-between; overflow: hidden; }
.fl { display: flex; gap: 4px; padding-left: 5px; color: #3c7fca; }
.fl .ic { width: 12px; height: 12px; }
.fl .ic:last-child { color: #9a9a9a; }
.fr { display: flex; align-items: flex-start; margin-right: 475px; color: #a0a0a0; }
.fr .ic { width: 10px; height: 10px; flex: none; }
.fring { width: 8px; height: 8px; border: 1.500px solid #aaa; border-radius: 50%; margin: 1px 0 0 11px; flex: none; }
.fline { width: 43px; height: 1px; background: #555; margin-top: 5px; flex: none; }
</style>

<style>
html, body { margin: 0; background: #171717; }
.ic { display: block; overflow: visible; }
</style>
